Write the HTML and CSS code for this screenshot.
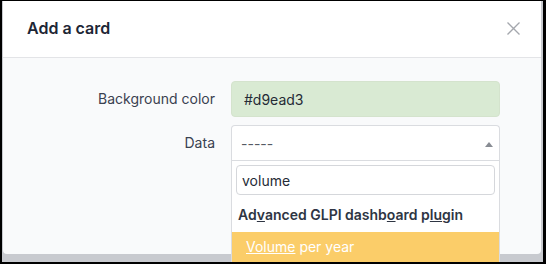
FILE: index.html
```html
<!DOCTYPE html>
<html lang="en">
<head>
    <meta charset="UTF-8">
    <meta name="viewport" content="width=device-width, initial-scale=1.0">
    <title>Add a card</title>
    <link rel="stylesheet" href="styles.css">
</head>
<body>
    <div class="screen">
        <div class="modal">
            <div class="modal-header">
                <h2>Add a card</h2>
                <button class="close" aria-label="Close">
                    <svg width="13" height="13" viewBox="0 0 13 13">
                        <path d="M0.5 0.5 L12.5 12.5 M12.5 0.5 L0.5 12.5" stroke="#a4a7ad" stroke-width="1.3" fill="none"/>
                    </svg>
                </button>
            </div>
            <div class="modal-body">
                <div class="form-row">
                    <label for="bgcolor">Background color</label>
                    <input type="text" id="bgcolor" class="color-input" value="#d9ead3">
                </div>
                <div class="form-row">
                    <label>Data</label>
                    <div class="select">
                        <div class="select-box">
                            <span>-----</span>
                            <span class="arrow"></span>
                        </div>
                        <div class="dropdown">
                            <div class="search">
                                <input type="text" value="volume">
                            </div>
                            <div class="group-label">Ad<u>v</u>anced GLPI dashb<u>o</u>ard p<u>lu</u>gin</div>
                            <div class="option active"><u>Volume</u> per year</div>
                        </div>
                    </div>
                </div>
            </div>
        </div>
    </div>
</body>
</html>
```

FILE: styles.css
```css
body {
    margin: 0;
    background: #000;
    font-family: Inter, "Noto Sans", sans-serif;
}
.screen {
    margin: 1px 0 0 2px;
    width: 541px;
    height: 261px;
    background: #c8cacf;
    overflow: hidden;
}
.modal {
    width: 538px;
    margin-left: 1px;
    background: #f9fafb;
    border-radius: 0 0 4px 4px;
}
.modal-header {
    box-sizing: border-box;
    display: flex;
    align-items: center;
    justify-content: space-between;
    height: 57px;
    padding: 0 21px 2px 24px;
    background: #fff;
    border-bottom: 1px solid #e3e4e7;
}
.modal-header h2 {
    margin: 0;
    font-size: 16px;
    font-weight: 600;
    color: #1d2635;
}
.close {
    border: none;
    background: none;
    padding: 0;
    display: flex;
}
.modal-body {
    box-sizing: border-box;
    height: 196px;
    padding-top: 23px;
}
.form-row {
    display: grid;
    grid-template-columns: 212px 269px;
    column-gap: 16px;
    align-items: start;
    margin-bottom: 8px;
}
.form-row label {
    text-align: right;
    font-size: 14px;
    color: #3a4150;
    line-height: 36px;
}
.color-input {
    box-sizing: border-box;
    height: 36px;
    border: 1px solid #d4e3cd;
    border-radius: 4px;
    background: #d9ead3;
    padding: 0 12px;
    font-family: inherit;
    font-size: 14px;
    color: #252b36;
}
.select {
    position: relative;
}
.select-box {
    box-sizing: border-box;
    height: 35px;
    display: flex;
    align-items: center;
    justify-content: space-between;
    padding: 0 6px 0 9px;
    background: #fff;
    border: 1px solid #dadce0;
    border-bottom: none;
    border-radius: 4px 4px 0 0;
    font-size: 14px;
    color: #555a63;
}
.arrow {
    width: 0;
    height: 0;
    border-left: 4px solid transparent;
    border-right: 4px solid transparent;
    border-bottom: 5px solid #888c93;
    margin-top: 2px;
}
.dropdown {
    position: absolute;
    left: 0;
    right: 0;
    top: 35px;
    background: #fff;
    border: 1px solid #dadce0;
}
.search {
    padding: 4px 4px 2px 4px;
}
.search input {
    box-sizing: border-box;
    width: 100%;
    height: 30px;
    border: 1px solid #d5d7db;
    border-radius: 4px;
    padding: 0 5px;
    font-family: inherit;
    font-size: 14px;
    color: #252b36;
}
.group-label {
    height: 35px;
    line-height: 36px;
    padding: 0 6px;
    font-size: 14px;
    font-weight: 600;
    color: #2e3543;
}
.option {
    height: 32px;
    line-height: 30px;
    padding: 0 14px;
    font-size: 14px;
}
.option.active {
    background: #fbcd69;
    color: #fff;
}
```
